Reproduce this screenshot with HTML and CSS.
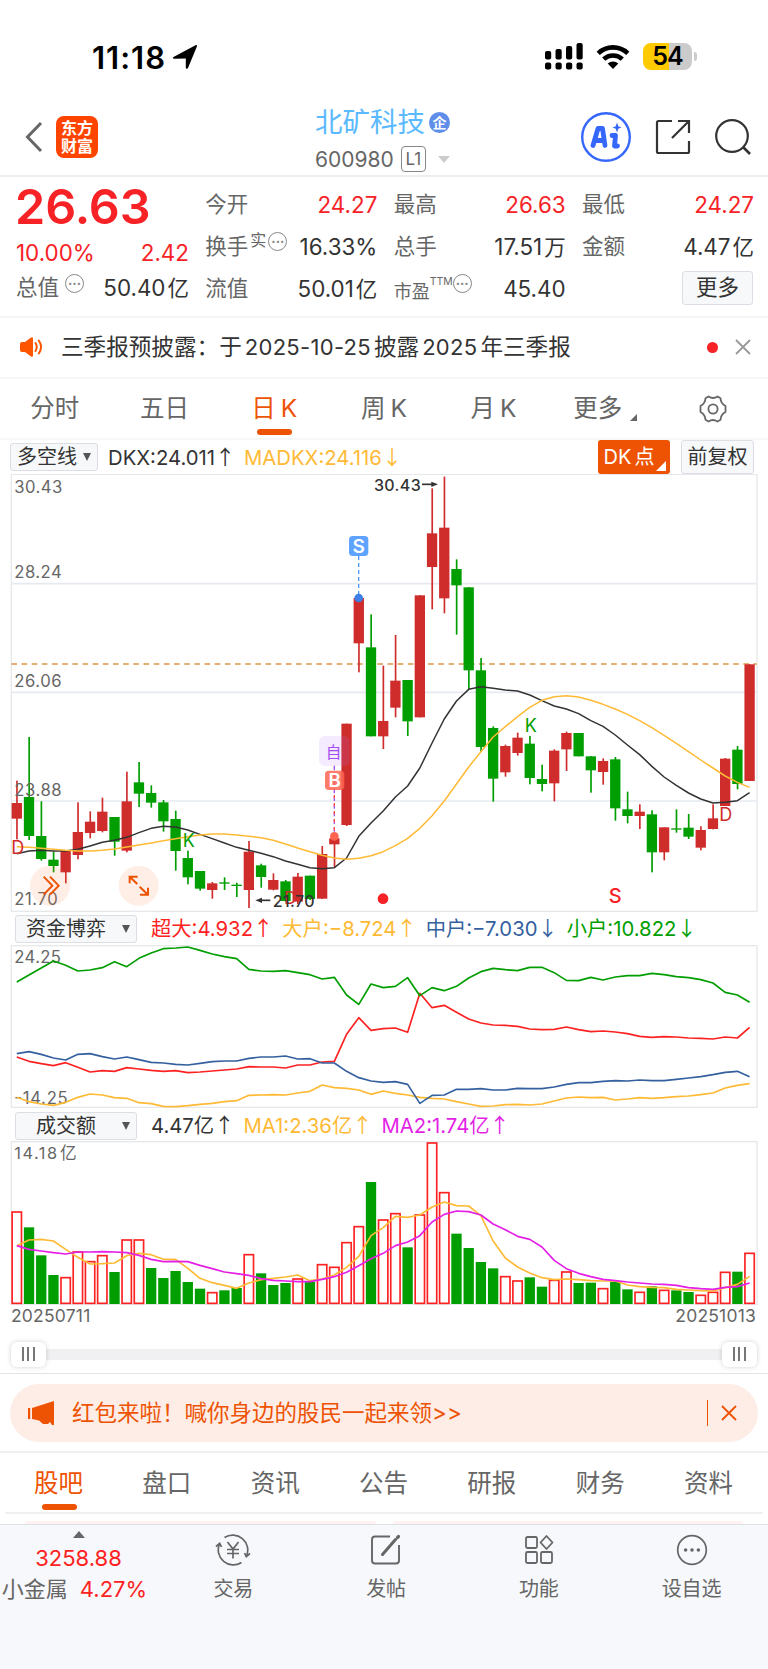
FILE: index.html
```
<!DOCTYPE html>
<html lang="zh-CN">
<head>
    <meta charset="UTF-8">
    <meta name="viewport" content="width=device-width, initial-scale=1.0">
    <title>北矿科技 600980</title>
    <link rel="stylesheet" href="styles.css">
</head>
<body>
    <div class="status-bar">
        <div class="clock">11:18
            <svg width="26" height="26" viewBox="0 0 26 26"><path d="M1.500 13 23.500 1.200c1-.5 1.800.2 1.400 1.300L16 24c-.6 1.300-2.200 1-2.200-.5v-9l-11.500.3c-1.500 0-2-1.200-.8-1.800z" fill="#000"/></svg>
        </div>
        <div class="status-icons">
            <svg width="38" height="27" viewBox="0 0 38 27">
                <g fill="#000">
                    <rect x="0" y="8" width="6.200" height="8.500" rx="2"/><rect x="10.500" y="6" width="6.200" height="10.500" rx="2"/><rect x="21" y="3" width="6.200" height="13.500" rx="2"/><rect x="31.500" y="0" width="6.200" height="16.500" rx="2"/>
                    <rect x="0" y="19.500" width="6.200" height="7" rx="2"/><rect x="10.500" y="19.500" width="6.200" height="7" rx="2"/><rect x="21" y="19.500" width="6.200" height="7" rx="2"/><rect x="31.500" y="19.500" width="6.200" height="7" rx="2"/>
                </g>
            </svg>
            <svg class="wifi" width="34" height="26" viewBox="0 0 34 26">
                <path d="M2.200 9.300a21.500 21.500 0 0 1 29.600 0M7.700 15.200a13.500 13.500 0 0 1 18.600 0" fill="none" stroke="#000" stroke-width="4.600"/>
                <path d="M17 25 11.700 19.500a8 8 0 0 1 10.600 0z" fill="#000"/>
            </svg>
            <div class="battery">54</div>
            <i class="battery-nub"></i>
        </div>
    </div>

    <header>
        <div class="header-left">
            <svg width="18" height="32" viewBox="0 0 18 32"><path d="M16 2 2.500 16 16 30" fill="none" stroke="#666" stroke-width="3"/></svg>
            <div class="logo">东方<br>财富</div>
        </div>
        <div class="stock-title">
            <div class="stock-name">北矿科技<span class="badge">企</span></div>
            <div class="stock-code">600980<span class="level">L1</span><i class="tri-down"></i></div>
        </div>
        <div class="header-right">
            <svg width="52" height="52" viewBox="0 0 52 52">
                <circle cx="26" cy="26" r="23.800" fill="none" stroke="#3567fb" stroke-width="2.400"/>
                <path d="M13 34.500 18 17.500h4.500L25 34.500M15.500 29.500h8.500" fill="none" stroke="#3567fb" stroke-width="4.800" stroke-linejoin="round" stroke-linecap="round"/>
                <path d="M32 24.500h3.500l-1 10.500h3" fill="none" stroke="#3567fb" stroke-width="4.800" stroke-linejoin="round" stroke-linecap="round"/>
                <path d="m37 11.500 1.300 3.700 3.200 1.300-3.200 1.300L37 21.500l-1.300-3.700-3.200-1.300 3.200-1.300z" fill="#3567fb"/>
            </svg>
            <svg class="share" width="38" height="38" viewBox="0 0 38 38"><path d="M18 3H4.500Q3 3 3 4.500v29Q3 35 4.500 35h29q1.500 0 1.500-1.500V23M24 3h11v12M35 3 18 20" fill="none" stroke="#333" stroke-width="2.200"/></svg>
            <svg class="search" width="38" height="38" viewBox="0 0 38 38"><circle cx="18" cy="18" r="15.800" fill="none" stroke="#333" stroke-width="2.200"/><path d="m29 29 7 7" stroke="#333" stroke-width="2.600"/></svg>
        </div>
    </header>

    <section class="quote">
        <div class="col">
            <div class="price">26.63</div>
            <div class="row change"><b>10.00%</b><b>2.42</b></div>
            <div class="row"><span>总值<i class="info">···</i></span><em>50.40<u>亿</u></em></div>
        </div>
        <div class="col">
            <div class="row"><span>今开</span><b>24.27</b></div>
            <div class="row"><span>换手<sup>实</sup><i class="info near">···</i></span><em>16.33%</em></div>
            <div class="row"><span>流值</span><em>50.01<u>亿</u></em></div>
        </div>
        <div class="col">
            <div class="row"><span>最高</span><b>26.63</b></div>
            <div class="row"><span>总手</span><em>17.51<u>万</u></em></div>
            <div class="row"><span class="pe">市盈<sup>TTM</sup><i class="info near">···</i></span><em>45.40</em></div>
        </div>
        <div class="col">
            <div class="row"><span>最低</span><b>24.27</b></div>
            <div class="row"><span>金额</span><em>4.47<u>亿</u></em></div>
            <div class="row end"><button class="more">更多</button></div>
        </div>
    </section>

    <section class="notice">
        <svg width="24" height="20" viewBox="0 0 24 20"><path d="M0 7q0-2 2-2h3l6-4.500q2-1 2 1v17q0 2-2 1L5 15H2q-2 0-2-2z" fill="#fe5500"/><path d="M15.500 6q2.500 4 0 8M18.800 3.500q4.500 6.500 0 13" fill="none" stroke="#fe5500" stroke-width="2" stroke-linecap="round"/></svg>
        <p>三季报预披露：于<u>2025-10-25</u>披露<u>2025</u>年三季报</p>
        <i class="dot"></i>
        <svg width="16" height="16" viewBox="0 0 16 16"><path d="m1 1 14 14M15 1 1 15" stroke="#999" stroke-width="1.800"/></svg>
    </section>

    <nav class="periods">
        <a>分时</a>
        <a>五日</a>
        <a class="active">日<u>K</u></a>
        <a>周<u>K</u></a>
        <a>月<u>K</u></a>
        <a class="period-more">更多<i class="corner"></i></a>
        <svg width="30" height="30" viewBox="0 0 30 30"><path d="M10.500 2.500q4.500 3 9 0l3 1.700q.3 5.300 5 7.800v6q-4.700 2.500-5 7.800l-3 1.700q-4.500-3-9 0l-3-1.700q-.3-5.300-5-7.800v-6q4.700-2.500 5-7.800z" fill="none" stroke="#666" stroke-width="1.800" stroke-linejoin="round"/><circle cx="15" cy="15" r="4.600" fill="none" stroke="#666" stroke-width="1.800"/></svg>
    </nav>

    <div class="indicator main-indicator">
        <button class="select">多空线<i></i></button>
        <span class="dkx">DKX:24.011<u>↑</u></span>
        <span class="yellow madkx">MADKX:24.116<u>↓</u></span>
        <button class="dk">DK<em>点</em><i class="corner"></i></button>
        <button class="adjust">前复权</button>
    </div>
    <svg id="kline" class="chart" width="768" height="438" viewBox="0 12 2304 1314"></svg>

    <div class="indicator sub">
        <button class="select wide">资金博弈<i></i></button>
        <span class="red">超大:4.932<u>↑</u></span>
        <span class="yellow">大户:−8.724<u>↑</u></span>
        <span class="blue">中户:−7.030<u>↓</u></span>
        <span class="green">小户:10.822<u>↓</u></span>
    </div>
    <svg id="fund" class="chart" width="768" height="163" viewBox="0 120 2304 489"></svg>

    <div class="indicator sub low">
        <button class="select wide indent">成交额<i></i></button>
        <span>4.47亿<u>↑</u></span>
        <span class="yellow">MA1:2.36亿<u>↑</u></span>
        <span class="magenta">MA2:1.74亿<u>↑</u></span>
    </div>
    <svg id="volume" class="chart" width="768" height="164" viewBox="0 18 2304 492"></svg>

    <div class="dates"><span>20250711</span><span>20251013</span></div>
    <div class="slider"><i class="handle"></i><i class="handle"></i></div>

    <div class="promo-wrap">
        <div class="promo">
            <svg width="27" height="24" viewBox="0 0 27 24"><path d="M0 7h2.200v11H0zM4 7 26 0v24h-2l-2-3-2 2h-5l-4-3.500L4 18z" fill="#ee5304"/></svg>
            <p>红包来啦！喊你身边的股民一起来领&gt;&gt;</p>
            <i class="bar"></i>
            <svg width="16" height="16" viewBox="0 0 16 16"><path d="m1 1 14 14M15 1 1 15" stroke="#ee5304" stroke-width="1.800"/></svg>
        </div>
    </div>

    <nav class="tabs">
        <a class="active">股吧</a>
        <a>盘口</a>
        <a>资讯</a>
        <a>公告</a>
        <a>研报</a>
        <a>财务</a>
        <a>资料</a>
    </nav>
    <div class="peek"><i></i><i></i></div>

    <footer>
        <div class="index">
            <i class="tri-up"></i>
            <div class="index-value">3258.88</div>
            <div class="index-name">小金属<b>4.27%</b></div>
        </div>
        <a>
            <svg width="36" height="32" viewBox="0 0 36 32"><g fill="none" stroke="#666" stroke-width="1.700"><path d="M9.500 3.500a15 15 0 0 1 22 18.500M26.500 28.500a15 15 0 0 1-22-18.500M1 12.500l3.700-3.200 1.800 3.700M35 19.500l-3.700 3.200-1.800-3.700M12.500 8l5.500 7 5.500-7M12 15.500h12M12 19.500h12M18 15v9.500"/></g></svg>
            交易
        </a>
        <a>
            <svg width="32" height="32" viewBox="0 0 32 32"><path d="M20 2.500H5Q2 2.500 2 5.500v21q0 3 3 3h21q3 0 3-3V11" fill="none" stroke="#666" stroke-width="1.900"/><path d="m12.500 20.500 13-15" stroke="#666" stroke-width="3" stroke-linecap="round"/><path d="m27.500 3.500 1-1" stroke="#666" stroke-width="3.200" stroke-linecap="round"/></svg>
            发帖
        </a>
        <a>
            <svg width="30" height="32" viewBox="0 0 30 32"><g fill="none" stroke="#666" stroke-width="1.800"><rect x="2" y="3" width="11" height="11" rx="1.500"/><rect x="2" y="18" width="11" height="11" rx="1.500"/><rect x="17" y="18" width="11" height="11" rx="1.500"/><path d="m22.500 2 6 6.500-6 6.500-6-6.500z" stroke-linejoin="round"/></g></svg>
            功能
        </a>
        <a>
            <svg width="32" height="32" viewBox="0 0 32 32"><circle cx="16" cy="16" r="14.300" fill="none" stroke="#666" stroke-width="1.700"/><g fill="#666"><circle cx="9.600" cy="16" r="1.800"/><circle cx="16" cy="16" r="1.800"/><circle cx="22.400" cy="16" r="1.800"/></g></svg>
            设自选
        </a>
    </footer>
<script src="charts.js"></script>
</body>
</html>
```
FILE: styles.css
```
body {
    margin: 0;
    width: 768px;
    background-color: #fff;
    color: #333;
    font-family: Inter, "Noto Sans CJK SC", sans-serif;
    font-size: 22px;
    line-height: 1;
}
b, em, i, u {
    font-weight: normal;
    font-style: normal;
    text-decoration: none;
}
p {
    margin: 0;
}
svg {
    display: block;
    flex: none;
}
a, span, button, p {
    white-space: nowrap;
}
button {
    box-sizing: border-box;
    padding: 0;
    font-family: inherit;
    line-height: 1;
    color: #333;
    background-color: #f7f8fa;
    border: 1px solid #dcdde5;
    border-radius: 3px;
}
.red { color: #fd2222; }
.green { color: #009e00; }
.blue { color: #35609f; }
.yellow { color: #ffba35; }
.magenta { color: #e41fe6; }

/* Status bar */
.status-bar {
    height: 99px;
    padding: 0 71px 0 92px;
    box-sizing: border-box;
    display: flex;
    justify-content: space-between;
}
.clock {
    display: flex;
    align-items: center;
    gap: 6px;
    height: 114px;
    color: #000;
    font-size: 31px;
    font-weight: 600;
    letter-spacing: 1px;
}
.status-icons {
    display: flex;
    align-items: center;
    height: 113px;
}
.wifi {
    margin: 0 13px;
}
.battery {
    width: 49px;
    height: 27px;
    line-height: 27px;
    border-radius: 8px;
    background: linear-gradient(90deg, #ffcb00 54%, #cbcbcb 54%);
    color: #000;
    text-align: center;
    font-size: 25px;
    font-weight: 600;
    letter-spacing: -1px;
}
.battery-nub {
    width: 3px;
    height: 9px;
    margin-left: 2px;
    border-radius: 0 4px 4px 0;
    background-color: #cbcbcb;
}

/* Header */
header {
    height: 78px;
    box-sizing: border-box;
    border-bottom: 2px solid #eee;
    padding: 0 16px 0 25px;
    display: grid;
    grid-template-columns: 290px 1fr 174px;
}
.header-left {
    display: flex;
    align-items: center;
    gap: 13px;
    height: 75px;
}
.logo {
    width: 42px;
    height: 42px;
    padding-top: 3px;
    box-sizing: border-box;
    border-radius: 8px;
    background-color: #ff4400;
    color: #fff;
    font-size: 16px;
    font-weight: bold;
    line-height: 18px;
    text-align: center;
}
.stock-name {
    display: flex;
    align-items: center;
    height: 47px;
    color: #5ab9ff;
    font-size: 27.500px;
}
.badge {
    width: 21px;
    height: 21px;
    line-height: 21px;
    margin-left: 4px;
    border-radius: 50%;
    background-color: #5f8eea;
    color: #fff;
    font-size: 14px;
    font-weight: bold;
    text-align: center;
}
.stock-code {
    display: flex;
    align-items: center;
    height: 26px;
    color: #666;
    font-size: 21px;
}
.level {
    width: 23px;
    height: 24px;
    line-height: 25px;
    margin-left: 7px;
    border: 1.500px solid #888;
    border-radius: 4px;
    font-size: 17px;
    text-align: center;
}
.tri-down {
    margin-left: 12px;
    border: 6px solid transparent;
    border-top: 7px solid #ccc;
    border-bottom: 0;
}
.header-right {
    display: flex;
    align-items: center;
    justify-content: flex-end;
    height: 75px;
}
.share {
    margin: 0 22px;
}

/* Quote */
.quote {
    height: 141px;
    box-sizing: border-box;
    padding: 7px 14px 0 16px;
    border-bottom: 2px solid #f5f5f5;
    display: grid;
    grid-template-columns: 173px 172px 172px 172px;
    justify-content: space-between;
    font-size: 21.500px;
}
.row {
    display: flex;
    justify-content: space-between;
    align-items: center;
    height: 42px;
}
.row span {
    display: flex;
    color: #666;
}
.row b {
    color: #f62226;
}
.row b, .row em {
    font-size: 22.400px;
}
.row u {
    margin-left: 2px;
    font-size: 21.500px;
}
.price {
    height: 54px;
    line-height: 46px;
    margin-left: -1px;
    color: #f62226;
    font-size: 48.500px;
    font-weight: 600;
}
.change {
    height: 30px;
}
.change + .row {
    height: 40px;
}
.row sup {
    margin: -4px 0 0 2px;
    font-size: 16px;
    line-height: 1;
    vertical-align: baseline;
}
.row .pe {
    font-size: 18px;
    margin-top: 5px;
}
.row .pe sup {
    margin: -6px 0 0 0;
    font-size: 10.500px;
}
.info {
    width: 17px;
    height: 17px;
    line-height: 16px;
    margin: -3px 0 0 6px;
    border: 1px solid #888;
    border-radius: 50%;
    font-size: 13px;
    font-weight: bold;
    text-align: center;
    color: #888;
}
.near {
    margin: -4px 0 0 2px;
}
.pe .info {
    margin: -9px 0 0 0;
}
.end {
    justify-content: flex-end;
}
.more {
    width: 71px;
    height: 34px;
    margin: -2px 1px 0 0;
    font-size: 21.500px;
}

/* Notice */
.notice {
    height: 61px;
    box-sizing: border-box;
    padding: 0 17px 1px 20px;
    border-bottom: 2px solid #f7f7f7;
    display: flex;
    align-items: center;
}
.notice p {
    flex: 1;
    margin-left: 17px;
    font-size: 22.600px;
}
.notice u {
    margin: 0 3px;
    font-size: 22px;
    letter-spacing: 0.300px;
}
.dot {
    width: 11px;
    height: 11px;
    margin-right: 17px;
    border-radius: 50%;
    background-color: #f62226;
}

/* Period tabs */
.periods {
    height: 61px;
    box-sizing: border-box;
    border-bottom: 2px solid #f7f7f7;
    display: grid;
    grid-template-columns: repeat(7, 109.700px);
    align-items: center;
    justify-items: center;
    color: #666;
    font-size: 24.500px;
}
.periods u {
    margin-left: 5px;
}
.periods a, .tabs a {
    position: relative;
}
.active {
    color: #ee5304;
}
.active::after {
    content: "";
    position: absolute;
    left: 50%;
    bottom: -14px;
    width: 35px;
    height: 6px;
    margin-left: -17px;
    border-radius: 3px;
    background-color: #ee5304;
}
.corner {
    display: inline-block;
    border-left: 7px solid transparent;
    border-bottom: 7px solid #666;
}
.periods .period-more {
    padding-left: 4px;
}
.period-more .corner {
    margin-left: 8px;
    vertical-align: -4px;
}

/* Indicator rows */
.indicator {
    display: flex;
    align-items: center;
    font-size: 20.300px;
}
/* full-width arrows come from the CJK font */
.indicator u {
    font-family: "Noto Sans CJK SC", sans-serif;
}
.main-indicator {
    height: 34px;
    padding: 0 14px 0 10px;
}
.select {
    width: 88px;
    height: 28px;
    padding: 0 6px;
    display: flex;
    align-items: center;
    justify-content: space-between;
    font-size: 20px;
}
.select i {
    border: 4px solid transparent;
    border-top: 8px solid #555;
    border-bottom: 0;
}
.dkx {
    margin-left: 10px;
    width: 136px;
}
.dk {
    position: relative;
    height: 34px;
    width: 72px;
    margin: 0 11px 0 auto;
    padding-right: 10px;
    border: 0;
    background-color: #ee5304;
    color: #fff;
    font-size: 20px;
}
.dk em {
    margin-left: 3px;
}
.dk .corner {
    position: absolute;
    right: 4px;
    bottom: 3px;
    border-left-width: 10px;
    border-bottom: 10px solid #fff;
}
.adjust {
    width: 73px;
    height: 34px;
    font-size: 20px;
}
.sub {
    height: 33px;
    padding-left: 15px;
}
.low {
    box-sizing: border-box;
    padding-top: 2px;
}
.wide {
    width: 122px;
    margin-right: 14px;
    padding-left: 10px;
}
.indent {
    padding-left: 20px;
}
.sub span {
    margin-right: 9px;
}
.dates {
    display: flex;
    justify-content: space-between;
    height: 30px;
    padding: 0 12px 0 11px;
    line-height: 22px;
    color: #666;
    font-size: 17.500px;
    letter-spacing: 0.200px;
}
.slider {
    height: 38px;
    margin: 0 11px;
    display: flex;
    align-items: center;
    justify-content: space-between;
    background: linear-gradient(#f0f0f3, #f0f0f3) center / 100% 11px no-repeat;
}
.handle {
    width: 35px;
    height: 25px;
    border-radius: 6px;
    background: linear-gradient(90deg, #777 2px, transparent 2px 5.500px, #777 5.500px 7.500px, transparent 7.500px 11px, #777 11px) center / 13px 14px no-repeat #fff;
    box-shadow: 0 0 5px rgba(0, 0, 0, 0.18);
}

/* Promo */
.promo-wrap {
    height: 80px;
    box-sizing: border-box;
    padding: 10px 10px 0;
    border-top: 1px solid #e4e4e4;
    border-bottom: 2px solid #f0f0f0;
}
.promo {
    height: 58px;
    box-sizing: border-box;
    padding: 0 21px 0 18px;
    border-radius: 29px;
    background-color: #fdede6;
    color: #ee5304;
    display: flex;
    align-items: center;
}
.promo p {
    flex: 1;
    margin-left: 17px;
    font-size: 22.500px;
}
.bar {
    width: 1.500px;
    height: 26px;
    margin-right: 13px;
    background-color: #ee5304;
}

/* Forum tabs */
.tabs {
    height: 61px;
    box-sizing: border-box;
    margin: 0 5px;
    padding: 2px 30px 0 29px;
    border-bottom: 2px solid #f0f0f0;
    display: flex;
    align-items: center;
    justify-content: space-between;
    color: #666;
    font-size: 24.500px;
}
.peek {
    height: 10px;
    padding: 7px 25px 0;
    box-sizing: border-box;
    display: flex;
    gap: 17px;
}
.peek i {
    flex: 1;
    border-radius: 10px 10px 0 0;
    background-color: #fef3f1;
}

/* Bottom bar */
footer {
    height: 145px;
    box-sizing: border-box;
    border-top: 1px solid #dfe0e3;
    background-color: #f7f8fb;
    display: grid;
    grid-template-columns: 157px repeat(4, 152.750px);
    color: #666;
}
footer a {
    padding-top: 9px;
    display: flex;
    flex-direction: column;
    align-items: center;
    gap: 13px;
    font-size: 20px;
}
.index {
    display: flex;
    flex-direction: column;
    align-items: center;
    padding-top: 6px;
}
.tri-up {
    border: 6px solid transparent;
    border-bottom: 7px solid #666;
    border-top: 0;
}
.index-value {
    margin-top: 9px;
    color: #fd2222;
    font-size: 22px;
}
.index-name {
    margin: 9px 8px 0 0;
    font-size: 22px;
}
.index-name b {
    margin-left: 12px;
    color: #fd2222;
}
```
FILE: charts.js
```
// all charts share one x axis: 61 trading days
var STEP = 36.64;
var FIRST = 50.4;
var BAR = 31;
var RED = '#cf2c2c';
var GREEN = '#009e00';

function x(i) {
    return FIRST + STEP * i;
}
function line(values, color, width) {
    var pts = values.map(function (v, i) { return x(i).toFixed(1) + ',' + v; }).join(' ');
    return '<polyline points="' + pts + '" fill="none" stroke="' + color + '" stroke-width="' + width + '" stroke-linejoin="round"/>';
}
function rule(y, color, width, dash) {
    return '<path d="M34 ' + y + 'H2270" stroke="' + color + '" stroke-width="' + width + '" stroke-dasharray="' + (dash || 'none') + '"/>';
}
function frame(top, bottom) {
    return '<rect x="34" y="' + top + '" width="2237" height="' + (bottom - top) + '" fill="none" stroke="#e6e8ea" stroke-width="4"/>';
}
function label(px, y, text, size, color, length, extra) {
    return '<text x="' + px + '" y="' + y + '" font-size="' + size + '" fill="' + color + '"' +
        (length ? ' textLength="' + length + '"' : '') + ' ' + (extra || '') + '>' + text + '</text>';
}

// direction, high, body top, body bottom, low
var candles = [
    ['r', 932, 999, 1046, 1108], ['g', 801, 981, 1098, 1110], ['g', 994, 1098, 1167, 1172], ['g', 1145, 1169, 1188, 1207],
    ['r', 1141, 1143, 1207, 1240], ['r', 997, 1086, 1155, 1168], ['r', 1024, 1055, 1089, 1105], ['r', 983, 1025, 1083, 1087],
    ['g', 1041, 1041, 1115, 1157], ['r', 905, 994, 1142, 1147], ['g', 876, 937, 971, 1011], ['g', 946, 969, 998, 1013],
    ['g', 990, 997, 1054, 1085], ['g', 1022, 1047, 1143, 1202], ['g', 1142, 1164, 1222, 1243], ['g', 1203, 1203, 1256, 1262],
    ['r', 1236, 1240, 1260, 1286], ['g', 1222, 1237, 1241, 1260], ['g', 1238, 1244, 1248, 1281], ['r', 1113, 1145, 1260, 1314],
    ['g', 1181, 1186, 1221, 1253], ['r', 1210, 1230, 1259, 1261], ['g', 1230, 1234, 1293, 1295], ['r', 1209, 1220, 1295, 1302],
    ['g', 1217, 1217, 1287, 1290], ['r', 1128, 1152, 1286, 1287], ['r', 1095, 1105, 1123, 1193], ['r', 761, 761, 1065, 1068],
    ['r', 380, 384, 520, 607], ['g', 433, 532, 799, 799], ['r', 587, 753, 799, 837], ['r', 495, 632, 713, 742],
    ['g', 630, 630, 754, 798], ['r', 376, 376, 742, 742], ['r', 55, 190, 291, 418], ['r', 20, 173, 385, 430],
    ['g', 268, 297, 346, 494], ['g', 351, 352, 601, 658], ['g', 564, 601, 831, 846], ['g', 769, 774, 926, 995],
    ['r', 824, 828, 907, 920], ['r', 788, 803, 849, 857], ['g', 798, 821, 924, 943], ['g', 884, 927, 942, 964],
    ['r', 838, 842, 940, 994], ['r', 785, 789, 838, 903], ['g', 789, 789, 859, 859], ['g', 858, 859, 901, 968],
    ['r', 865, 873, 906, 944], ['g', 861, 868, 1015, 1052], ['g', 965, 1018, 1038, 1060], ['r', 1003, 1025, 1038, 1077],
    ['g', 1021, 1033, 1147, 1207], ['r', 1072, 1072, 1147, 1171], ['g', 1018, 1075, 1079, 1088], ['g', 1032, 1073, 1100, 1107],
    ['r', 1069, 1080, 1133, 1141], ['r', 1003, 1045, 1077, 1078], ['r', 864, 866, 1008, 1008], ['g', 828, 839, 942, 958],
    ['r', 583, 583, 933, 933]
];
var dkx = [1151, 1143, 1141, 1143, 1143, 1138, 1128, 1117, 1111, 1102, 1088, 1075, 1069, 1071, 1080, 1093, 1106, 1119, 1132, 1141,
    1150, 1160, 1173, 1183, 1193, 1196, 1193, 1164, 1099, 1059, 1023, 981, 948, 894, 819, 747, 693, 658, 650, 655,
    660, 663, 675, 692, 708, 717, 731, 752, 769, 795, 825, 854, 889, 921, 946, 969, 987, 999, 997, 992, 968];
var madkx = [1130, 1132, 1135, 1138, 1141, 1143, 1143, 1141, 1137, 1131, 1125, 1119, 1112, 1106, 1100, 1095, 1092, 1092, 1095, 1099,
    1103, 1111, 1122, 1134, 1145, 1156, 1164, 1168, 1165, 1157, 1145, 1127, 1105, 1075, 1037, 993, 942, 891, 845, 801,
    770, 740, 712, 691, 680, 677, 681, 691, 703, 717, 733, 752, 773, 796, 820, 845, 870, 894, 918, 937, 952];

function drawKline() {
    var out = frame(13, 1324) + rule(341, '#e6eaf0', 5) + rule(667, '#e6eaf0', 5) + rule(993, '#e6eaf0', 5);
    out += rule(582, '#dc9447', 5, '17 13.500');
    candles.forEach(function (c, i) {
        var color = c[0] === 'r' ? RED : GREEN;
        out += '<rect x="' + (x(i) - 2) + '" y="' + c[1] + '" width="5" height="' + (c[4] - c[1]) + '" fill="' + color + '"/>';
        out += '<rect x="' + (x(i) - BAR / 2) + '" y="' + c[2] + '" width="' + BAR + '" height="' + (c[3] - c[2]) + '" fill="' + color + '"/>';
    });
    out += line(dkx, '#333', 4.5) + line(madkx, '#ffba35', 4.5);

    // price scale
    out += label(43, 69, '30.43', 50, '#666', 144) + label(43, 324, '28.24', 50, '#666', 142) + label(43, 651, '26.06', 50, '#666', 142);
    out += label(43, 978, '23.88', 50, '#666', 142) + label(43, 1305, '21.70', 50, '#666', 130);

    // floating buttons
    out += '<circle cx="150" cy="1247" r="60" fill="#fb7a3c" opacity=".13"/><circle cx="416" cy="1247" r="60" fill="#fb7a3c" opacity=".13"/>';
    out += '<g fill="none" stroke="#ee5304" stroke-width="6"><path d="m131 1220 26 27-26 27M150 1220l26 27-26 27"/>' +
        '<path d="m389 1220 23 22M389 1240v-20h24M444 1274l-25-24M444 1253v21h-24"/></g>';

    // signal letters
    out += label(34, 1152, 'D', 54, RED) + label(548, 1130, 'K', 54, GREEN) + label(1574, 785, 'K', 54, GREEN);
    out += label(2158, 1053, 'D', 54, RED) + label(1826, 1299, 'S', 60, '#f62226', 0, 'font-weight="500"') + label(852, 1302, 'D', 52, RED);

    // extremes
    out += label(1122, 62, '30.43', 48, '#333', 140, 'font-weight="500"') + '<path d="M1266 43h32" stroke="#333" stroke-width="5"/><path d="m1294 35 20 8-20 8z" fill="#333"/>';
    out += label(818, 1310, '21.70', 48, '#333', 126, 'font-weight="500"') + '<path d="M781 1291h30" stroke="#333" stroke-width="5"/><path d="m786 1283-20 8 20 8z" fill="#333"/>';

    // trade marks
    out += '<path d="M1076 258v120" stroke="#4f97ff" stroke-width="4" stroke-dasharray="12 9"/><circle cx="1076" cy="384" r="13" fill="#3f7fe8"/>';
    out += '<rect x="1047" y="198" width="58" height="60" rx="11" fill="#5ea3ff"/>' + label(1076, 248, 'S', 57, '#fff', 0, 'text-anchor="middle" font-weight="600"');
    out += '<path d="M1003 887v205" stroke="#a44df5" stroke-width="4" stroke-dasharray="14 9"/><path d="M1003 975v120" stroke="#ff4a4a" stroke-width="4" stroke-dasharray="10 14"/>';
    out += '<circle cx="1003" cy="1099" r="13" fill="#ff6450"/><rect x="957" y="798" width="92" height="90" rx="17" fill="#b47af5" opacity=".15"/>';
    out += label(1001, 863, '自', 47, '#a44df5', 0, 'text-anchor="middle"');
    out += '<rect x="975" y="902" width="58" height="58" rx="11" fill="#ff6450" opacity=".85"/>' + label(1004, 951, 'B', 56, '#fff', 0, 'text-anchor="middle" font-weight="600"');
    out += '<circle cx="1149" cy="1286" r="16" fill="#f62226"/>';
    document.getElementById('kline').innerHTML = out;
}

var small = [231, 210, 189, 168, 181, 198, 195, 188, 170, 185, 160, 144, 131, 129, 126, 136, 147, 155, 161, 193, 198, 199, 197, 203, 209,
    222, 217, 270, 298, 237, 248, 244, 218, 272, 248, 257, 244, 219, 200, 190, 194, 197, 187, 187, 203, 226, 227, 217, 225, 216, 212, 212,
    205, 209, 215, 218, 224, 234, 262, 270, 292];
var huge = [456, 469, 476, 482, 473, 487, 501, 497, 499, 488, 492, 496, 499, 497, 503, 501, 498, 495, 492, 485, 486, 486, 489, 480, 480,
    471, 469, 388, 338, 376, 371, 369, 382, 265, 308, 301, 322, 342, 354, 360, 361, 364, 372, 374, 373, 366, 374, 380, 378, 381, 386, 394,
    397, 395, 396, 399, 400, 402, 396, 399, 367];
var middle = [446, 440, 448, 459, 465, 448, 446, 455, 462, 456, 464, 472, 474, 478, 480, 475, 470, 468, 468, 460, 456, 456, 453, 462, 461,
    474, 474, 499, 518, 528, 532, 530, 538, 595, 571, 570, 553, 553, 551, 555, 555, 550, 551, 551, 546, 538, 533, 533, 529, 527, 528, 525,
    527, 527, 523, 519, 515, 509, 502, 499, 515];
var large = [577, 590, 597, 601, 592, 577, 567, 570, 578, 580, 593, 596, 604, 605, 602, 598, 595, 590, 587, 571, 570, 569, 570, 564, 559,
    540, 548, 550, 555, 568, 558, 565, 570, 577, 580, 582, 590, 597, 604, 603, 599, 598, 600, 597, 588, 579, 576, 578, 577, 585, 582, 578,
    580, 578, 575, 573, 569, 564, 549, 541, 536];

function drawFund() {
    document.getElementById('fund').innerHTML = frame(122, 607) +
        label(43, 174, '24.25', 50, '#666', 140) + label(43, 596, '-14.25', 50, '#666', 160) +
        line(large, '#ffba35', 5) + line(huge, '#fd2222', 5) + line(middle, '#35609f', 5) + line(small, GREEN, 5);
}

var dirs = 'rgggrrrrgrrgggggrggrgggrgrrrrgrrgrrrggggrrggrrggrggrgrggrrrgr';
var amounts = [229, 277, 361, 420, 426, 349, 378, 360, 411, 313, 313, 399, 429, 408, 441, 461, 471, 466, 459, 357, 415, 450, 444, 430, 440,
    387, 395, 321, 273, 141, 253, 234, 337, 238, 22, 171, 296, 339, 381, 400, 423, 436, 427, 455, 434, 409, 444, 443, 459, 440, 463, 470,
    454, 464, 466, 471, 479, 470, 410, 410, 353];
var ma1 = [332, 315, 313, 318, 343, 367, 387, 386, 384, 362, 355, 359, 373, 373, 400, 430, 443, 451, 460, 444, 434, 430, 426, 420, 437,
    432, 420, 397, 364, 302, 278, 244, 247, 240, 216, 201, 212, 213, 242, 318, 369, 396, 414, 428, 434, 432, 434, 437, 438, 438, 450, 455,
    457, 458, 463, 465, 467, 468, 458, 448, 424];
var ma2 = [332, 343, 348, 353, 357, 351, 351, 350, 351, 353, 361, 373, 380, 379, 380, 391, 401, 411, 416, 421, 431, 436, 438, 440, 440,
    433, 425, 412, 392, 371, 355, 332, 321, 302, 261, 238, 228, 230, 240, 267, 284, 304, 313, 336, 376, 401, 415, 425, 433, 437, 441, 444,
    447, 448, 451, 458, 461, 463, 457, 455, 444];

function drawVolume() {
    var out = frame(20, 508);
    amounts.forEach(function (top, i) {
        if (dirs[i] === 'g') {
            out += '<rect x="' + (x(i) - BAR / 2) + '" y="' + top + '" width="' + BAR + '" height="' + (507 - top) + '" fill="' + GREEN + '"/>';
        } else {
            // rising days are hollow
            out += '<rect x="' + (x(i) - 14) + '" y="' + (top + 2) + '" width="28" height="' + (503 - top) + '" fill="#fff" stroke="#fd2222" stroke-width="5"/>';
        }
    });
    out += line(ma1, '#ffba35', 5) + line(ma2, '#e41fe6', 5);
    out += label(43, 73, '14.18', 49, '#666', 128) + label(180, 73, '亿', 50, '#666');
    document.getElementById('volume').innerHTML = out;
}

drawKline();
drawFund();
drawVolume();
```
